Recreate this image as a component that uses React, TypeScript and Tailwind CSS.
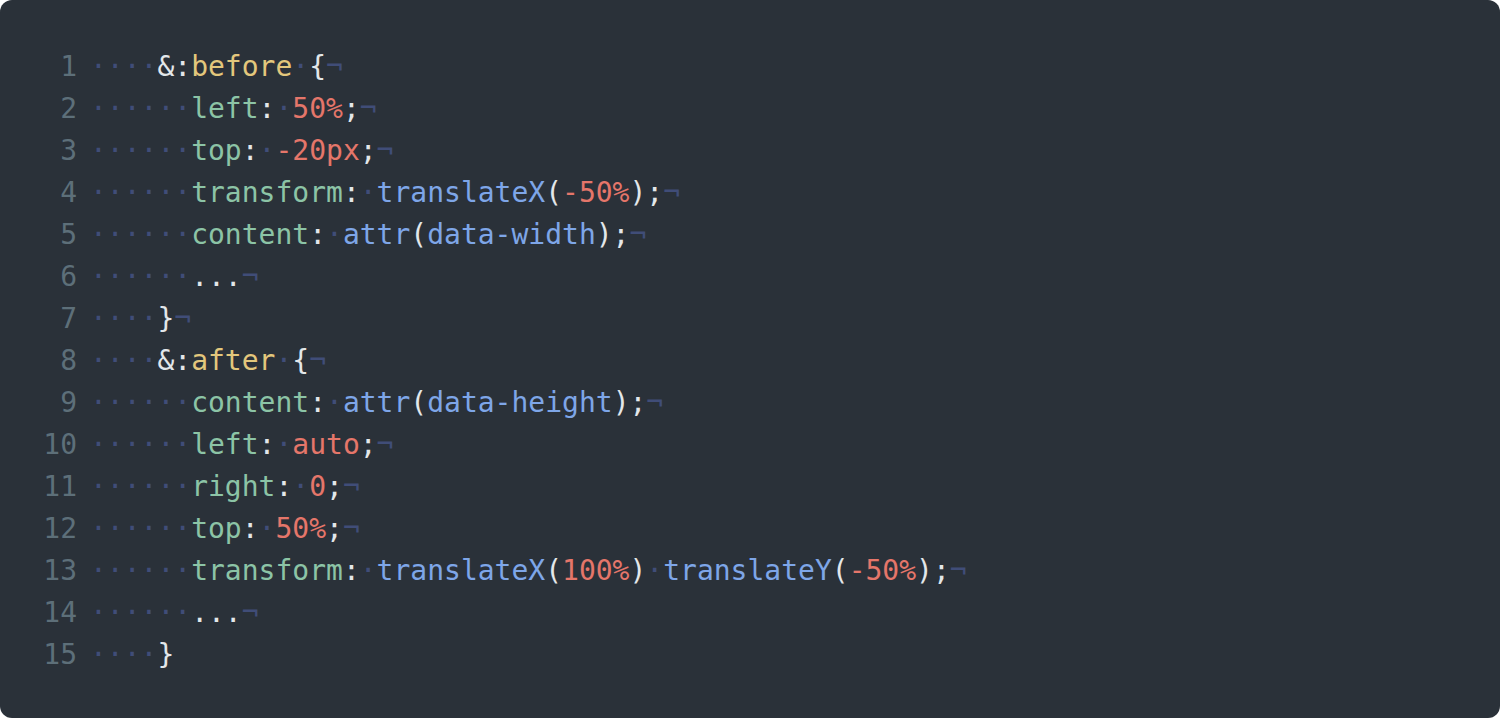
import React from 'react';

type Kind = 'ws' | 'eol' | 'plain' | 'sel' | 'prop' | 'num' | 'fn';

type Token = [Kind, string];

const tokenClass: Record<Kind, string> = {
  ws: 'text-[#404d78]',
  eol: 'text-[#404d78]',
  plain: 'text-[#e3e7ea]',
  sel: 'text-[#e3c77c]',
  prop: 'text-[#8cc4a6]',
  num: 'text-[#e5766a]',
  fn: 'text-[#7ea6e8]',
};

const dots = (n: number): Token => ['ws', '·'.repeat(n)];
const EOL: Token = ['eol', '¬'];

const lines: Token[][] = [
  [dots(4), ['plain', '&:'], ['sel', 'before'], dots(1), ['plain', '{'], EOL],
  [dots(6), ['prop', 'left'], ['plain', ':'], dots(1), ['num', '50%'], ['plain', ';'], EOL],
  [dots(6), ['prop', 'top'], ['plain', ':'], dots(1), ['num', '-20px'], ['plain', ';'], EOL],
  [
    dots(6),
    ['prop', 'transform'],
    ['plain', ':'],
    dots(1),
    ['fn', 'translateX'],
    ['plain', '('],
    ['num', '-50%'],
    ['plain', ');'],
    EOL,
  ],
  [
    dots(6),
    ['prop', 'content'],
    ['plain', ':'],
    dots(1),
    ['fn', 'attr'],
    ['plain', '('],
    ['fn', 'data-width'],
    ['plain', ');'],
    EOL,
  ],
  [dots(6), ['plain', '...'], EOL],
  [dots(4), ['plain', '}'], EOL],
  [dots(4), ['plain', '&:'], ['sel', 'after'], dots(1), ['plain', '{'], EOL],
  [
    dots(6),
    ['prop', 'content'],
    ['plain', ':'],
    dots(1),
    ['fn', 'attr'],
    ['plain', '('],
    ['fn', 'data-height'],
    ['plain', ');'],
    EOL,
  ],
  [dots(6), ['prop', 'left'], ['plain', ':'], dots(1), ['num', 'auto'], ['plain', ';'], EOL],
  [dots(6), ['prop', 'right'], ['plain', ':'], dots(1), ['num', '0'], ['plain', ';'], EOL],
  [dots(6), ['prop', 'top'], ['plain', ':'], dots(1), ['num', '50%'], ['plain', ';'], EOL],
  [
    dots(6),
    ['prop', 'transform'],
    ['plain', ':'],
    dots(1),
    ['fn', 'translateX'],
    ['plain', '('],
    ['num', '100%'],
    ['plain', ')'],
    dots(1),
    ['fn', 'translateY'],
    ['plain', '('],
    ['num', '-50%'],
    ['plain', ');'],
    EOL,
  ],
  [dots(6), ['plain', '...'], EOL],
  [dots(4), ['plain', '}']],
];

const App: React.FC = () => {
  return (
    <div className="w-[1500px] h-[718px] bg-white">
      <div
        className="h-full rounded-[12px] bg-[#2a3139] pt-[46px] pl-[43px] text-[28px] leading-[42px]"
        style={{ fontFamily: '"DejaVu Sans Mono", "Liberation Mono", monospace' }}
      >
        {lines.map((tokens, i) => (
          <div key={i} className="flex whitespace-pre">
            <span className="w-[34px] text-right text-[#5d6f79]">{i + 1}</span>
            <span className="pl-[13px]">
              {tokens.map(([kind, text], j) => (
                <span key={j} className={tokenClass[kind]}>
                  {text}
                </span>
              ))}
            </span>
          </div>
        ))}
      </div>
    </div>
  );
};

export default App;
